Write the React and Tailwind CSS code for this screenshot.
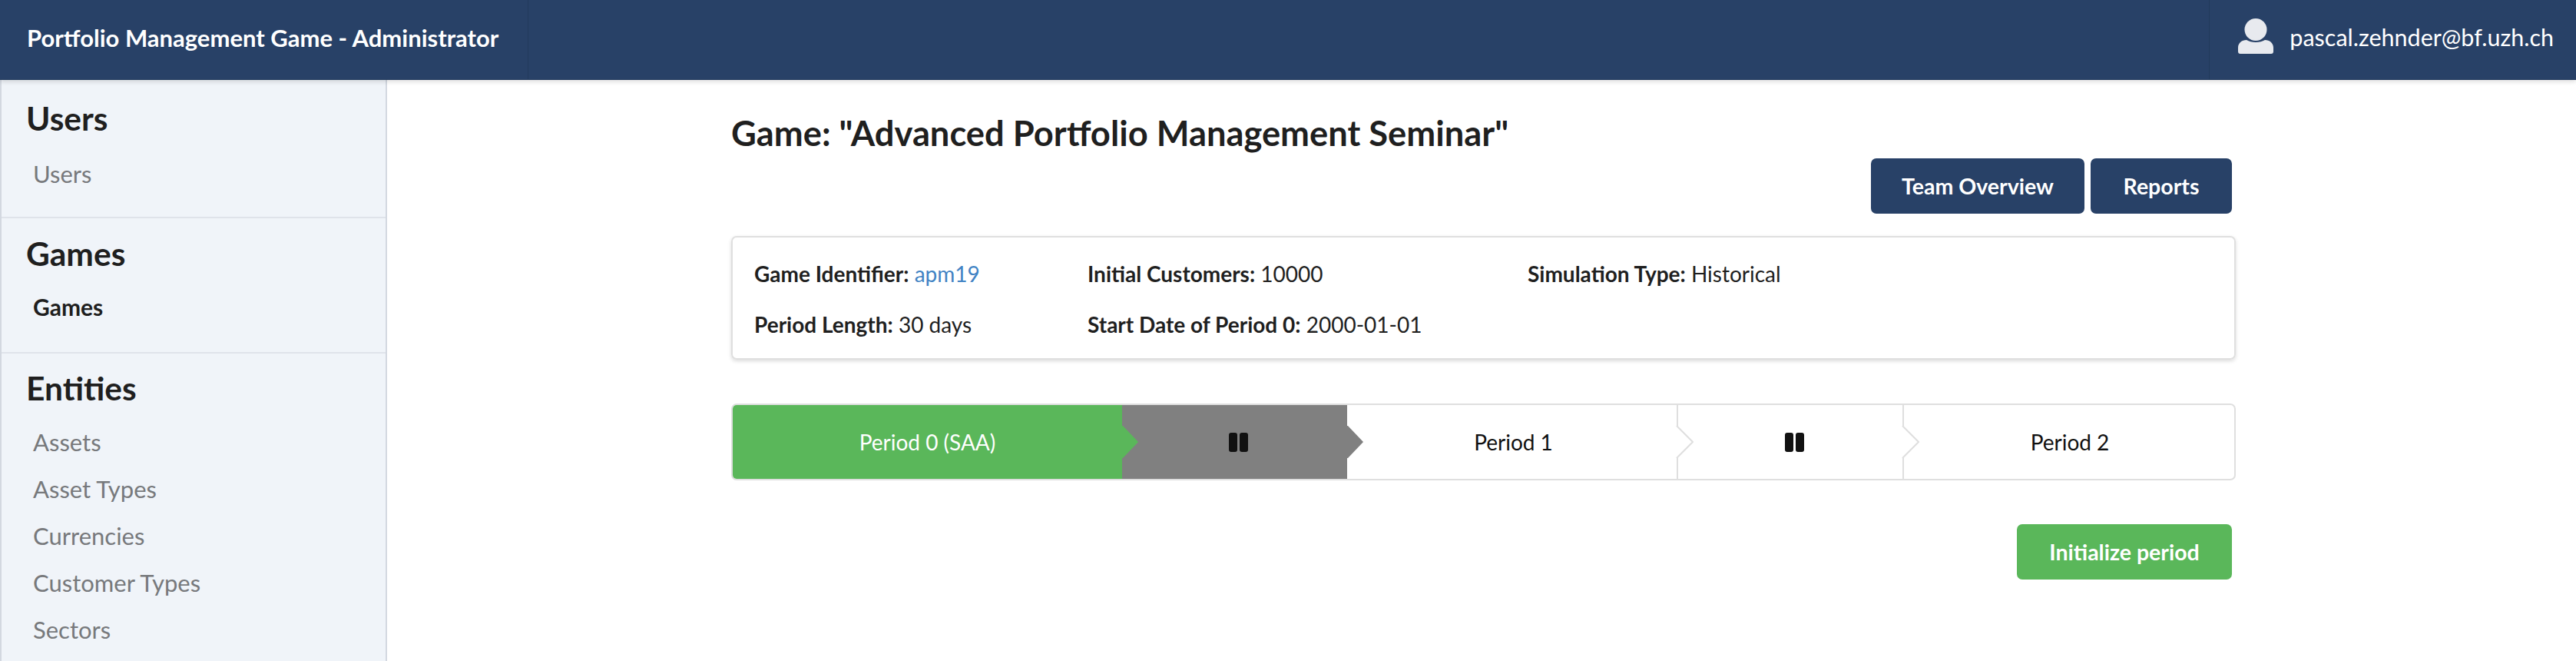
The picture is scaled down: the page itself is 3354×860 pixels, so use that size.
const font = "font-['Lato',sans-serif]";

function UserIcon() {
  return (
    <svg width="46" height="46" viewBox="0 0 46 46" className="shrink-0">
      <circle cx="23" cy="14.5" r="14.5" fill="#e8eaef" />
      <path d="M3 46 Q0 46 0 43 V38 C0 32 5 28 11 28 Q16 31 23 31 Q30 31 35 28 C41 28 46 32 46 38 V43 Q46 46 43 46 Z" fill="#e8eaef" />
    </svg>
  );
}

function Pause() {
  return (
    <svg width="25" height="25" viewBox="0 0 25 25" className="ml-[10px]">
      <rect x="0" y="0" width="11" height="25" rx="3" fill="#111" />
      <rect x="14" y="0" width="11" height="25" rx="3" fill="#111" />
    </svg>
  );
}

function Arrow({ fill, stroke }) {
  return (
    <svg width="24" height="46" viewBox="0 0 24 46" className="absolute left-full top-1/2 -translate-y-1/2 -ml-[2px] z-10">
      <polygon points="0,2 3,2 23,23 3,44 0,44" fill={fill} />
      {stroke && <polyline points="2,2 23,23 2,44" fill="none" stroke={stroke} strokeWidth="2" />}
    </svg>
  );
}

function NavSection({ title, items, box, gap }) {
  return (
    <div className={box}>
      <div className="h-[46px] pl-[32px] text-[42.5px] leading-[46px] font-bold text-[#1f1f1f]">{title}</div>
      <div className={`${gap} flex flex-col`}>
        {items.map((it) => (
          <div key={it.label} className={`h-[61px] pl-[41px] leading-[61px] ${it.active ? "font-bold text-[#1f1f1f] text-[30px]" : "text-[#77797c] text-[31px]"}`}>
            {it.label}
          </div>
        ))}
      </div>
    </div>
  );
}

export default function App() {
  return (
    <div className={`${font} h-[860px] w-[3354px] overflow-hidden flex flex-col bg-white text-[#1f1f1f]`}>
      <header className="h-[104px] shrink-0 bg-[#284167] flex items-center justify-between shadow-[0_2px_6px_rgba(0,0,0,0.15)] relative z-20 border-b border-[#223a5c]">
        <div className="h-full w-[688px] flex items-center pl-[35px] pb-[4px] border-r border-[#223a5c] text-white text-[31px] font-bold whitespace-nowrap">
          Portfolio Management Game - Administrator
        </div>
        <div className="h-full flex items-center pl-[37px] pr-[29px] pb-[10px] gap-[21px] border-l border-[#223a5c] text-white text-[30.5px]">
          <UserIcon />
          <span className="pt-[4px]">pascal.zehnder@bf.uzh.ch</span>
        </div>
      </header>
      <div className="flex flex-1 min-h-0">
        <aside className="w-[504px] shrink-0 bg-[#f0f4f9] border-l-2 border-r-2 border-[#d3d8e0]">
          <NavSection box="h-[180px] pt-[27px] border-b-2 border-[#dfe3ea]" gap="mt-[19px]" title="Users" items={[{ label: "Users" }]} />
          <NavSection box="h-[176px] pt-[23px] border-b-2 border-[#dfe3ea]" gap="mt-[16px]" title="Games" items={[{ label: "Games", active: true }]} />
          <NavSection
            box="pt-[22px]"
            gap="mt-[17px]"
            title="Entities"
            items={[
              { label: "Assets" },
              { label: "Asset Types" },
              { label: "Currencies" },
              { label: "Customer Types" },
              { label: "Sectors" },
            ]}
          />
        </aside>
        <main className="flex-1 min-w-0 pl-[448px]">
          <div className="w-[1959px]">
            <h1 className="mt-[44px] h-[50px] text-[45.3px] leading-[50px] font-bold whitespace-nowrap text-[#1f1f1f]">
              Game: "Advanced Portfolio Management Seminar"
            </h1>
            <div className="mt-[8px] flex justify-end gap-[8px] pr-[5px]">
              <button className="h-[72px] w-[278px] rounded-[7px] bg-[#284167] text-white text-[28.5px] font-bold">Team Overview</button>
              <button className="h-[72px] w-[184px] rounded-[7px] bg-[#284167] text-white text-[28.5px] font-bold">Reports</button>
            </div>
            <div className="mt-[29px] h-[161px] rounded-[7px] border-2 border-[#dfdfdf] shadow-[0_2px_5px_rgba(0,0,0,0.14)] pl-[28px] text-[28px] grid grid-cols-[434px_573px_1fr] grid-rows-[66px_66px] pt-[14px]">
              <div className="flex items-center"><b>Game Identifier:</b>&nbsp;<span className="text-[#4183c4]">apm19</span></div>
              <div className="flex items-center"><b>Initial Customers:</b>&nbsp;10000</div>
              <div className="flex items-center"><b>Simulation Type:</b>&nbsp;Historical</div>
              <div className="flex items-center"><b>Period Length:</b>&nbsp;30 days</div>
              <div className="flex items-center col-span-2"><b>Start Date of Period 0:</b>&nbsp;2000-01-01</div>
            </div>
            <div className="mt-[57px] h-[100px] rounded-[7px] border-2 border-[#dfdfdf] flex text-[28px] text-[#111]">
              <div className="relative w-[507px] bg-[#5ab75a] rounded-l-[5px] text-white flex items-center justify-center">
                Period 0 (SAA)
                <Arrow fill="#5ab75a" />
              </div>
              <div className="relative w-[293px] bg-[#808080] flex items-center justify-center">
                <Pause />
                <Arrow fill="#808080" />
              </div>
              <div className="relative w-[431px] border-r-2 border-[#dfdfdf] flex items-center justify-center pl-[4px]">
                Period 1
                <Arrow fill="#ffffff" stroke="#dfdfdf" />
              </div>
              <div className="relative w-[294px] border-r-2 border-[#dfdfdf] flex items-center justify-center">
                <Pause />
                <Arrow fill="#ffffff" stroke="#dfdfdf" />
              </div>
              <div className="flex-1 flex items-center justify-center pl-[2px]">Period 2</div>
            </div>
            <div className="mt-[57px] flex justify-end pr-[5px]">
              <button className="h-[72px] w-[280px] rounded-[7px] bg-[#5ab75a] text-white text-[28.5px] font-bold">Initialize period</button>
            </div>
          </div>
        </main>
      </div>
    </div>
  );
}
